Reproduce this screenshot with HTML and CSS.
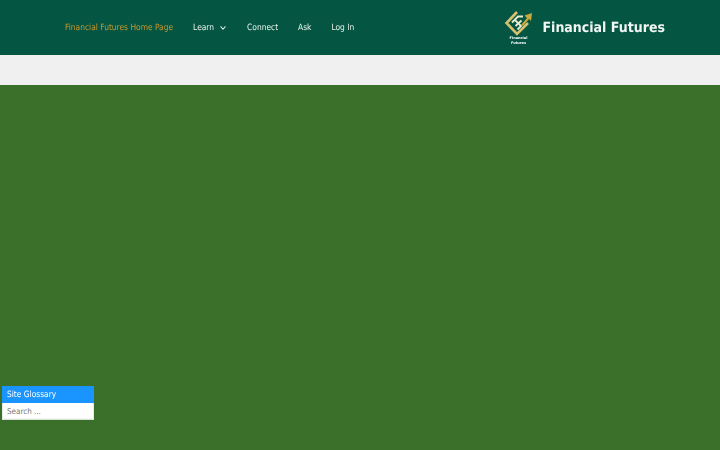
FILE: index.html
```html
<!DOCTYPE html>
<html lang="en">
<head>
<meta charset="utf-8">
<title>Financial Futures</title>
<link rel="stylesheet" href="styles.css">
</head>
<body>
<header class="site-header">
  <nav class="nav">
    <a class="nav-link current" href="#">Financial Futures Home Page</a>
    <a class="nav-link" href="#">Learn<svg class="caret" width="6" height="4" viewBox="0 0 6 4"><path d="M.5.5L3 3 5.500.5" fill="none" stroke="currentColor" stroke-width=".9"/></svg></a>
    <a class="nav-link" href="#">Connect</a>
    <a class="nav-link" href="#">Ask</a>
    <a class="nav-link" href="#">Log In</a>
  </nav>
  <div class="brand">
    <div class="logo">
      <svg class="logo-mark" width="28" height="26" viewBox="0 0 28 26">
        <path d="M13 2L2.500 13 13 24 24 13" fill="none" stroke="#d6c070" stroke-width="2.600"/>
        <path d="M8 12.500L14 6.500h5M11.500 16l6-5.500M11 10l6 6-3.500 3.500" fill="none" stroke="#ecebd0" stroke-width="1.800"/>
        <path d="M17 15l6-7-2.500-2.500L28 3l-1 8-2-2-6 7z" fill="#c9a93e"/>
      </svg>
      <span class="logo-text">Financial<br>Futures</span>
    </div>
    <span class="site-title">Financial Futures</span>
  </div>
</header>
<div class="band"></div>
<main class="content"></main>
<aside class="glossary">
  <div class="glossary-title"><span class="glossary-label">Site Glossary</span></div>
  <input class="glossary-search" type="text" placeholder="Search ...">
</aside>
</body>
</html>
```
FILE: styles.css
```css
html, body { margin: 0; height: 100%; }
body {
  font-family: "DejaVu Sans", sans-serif;
  background: #3a7029;
  display: flex;
  flex-direction: column;
  height: 450px;
  overflow: hidden;
  text-rendering: geometricPrecision;
}
.site-header {
  height: 55px;
  background: #045643;
  display: flex;
  align-items: center;
  justify-content: space-between;
  padding: 0 55px 0 65px;
}
.nav { display: flex; gap: 20px; align-items: center; filter: blur(.25px); }
.nav-link {
  display: inline-block;
  color: #e8f2ec;
  font-size: 7.5px;
  text-decoration: none;
  white-space: nowrap;
  transform: scaleY(1.15);
}
.nav-link.current { color: #c8962c; }
.caret { margin: 0 1px 0 6px; vertical-align: .5px; }
.brand { display: flex; align-items: center; gap: 10px; filter: blur(.25px); }
.logo { width: 28px; display: flex; flex-direction: column; align-items: center; }
.logo-mark { display: block; }
.logo-text {
  color: #fff;
  font-size: 3.5px;
  font-weight: 700;
  line-height: 5px;
  text-align: center;
}
.site-title {
  display: inline-block;
  color: #f2f6f2;
  font-size: 12.6px;
  font-weight: 700;
  transform: scaleY(1.11);
}
.band { height: 30px; background: #f0f0f0; }
.content { flex: 1; background: #3a7029; }
.glossary { position: fixed; left: 2px; top: 386px; width: 92px; }
.glossary-title {
  background: #1a94ff;
  color: #fff;
  font-size: 7.5px;
  height: 17px;
  line-height: 17px;
  padding-left: 5px;
}
.glossary-label { display: inline-block; transform: scaleY(1.15); }
.glossary-search {
  display: block;
  box-sizing: border-box;
  width: 100%;
  height: 15.3px;
  border: 1px solid #e6ebe6;
  border-top: 0;
  padding: 1px 4px 0;
  font: 7.2px "DejaVu Sans", sans-serif;
  background: #fff;
  transform: scaleY(1.11);
  transform-origin: top;
}
.glossary-search::placeholder { color: #777; }
```
